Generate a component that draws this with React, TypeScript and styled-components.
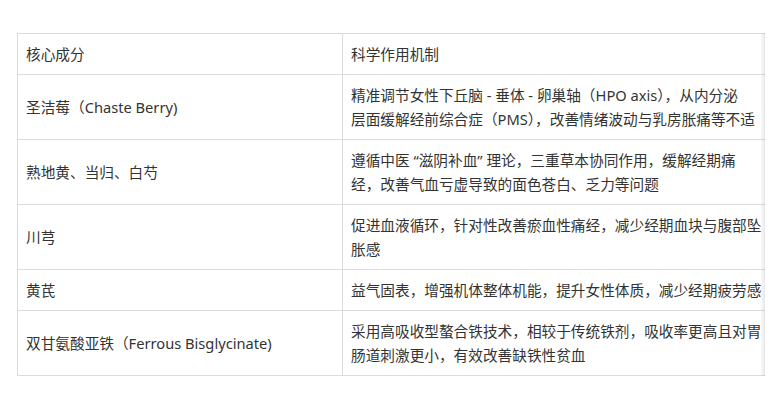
import styled, { createGlobalStyle } from 'styled-components';

type Row = {
  name: string;
  effect: string[];
};

const rows: Row[] = [
  {
    name: '圣洁莓（Chaste Berry)',
    effect: [
      '精准调节女性下丘脑 - 垂体 - 卵巢轴（HPO axis），从内分泌',
      '层面缓解经前综合症（PMS），改善情绪波动与乳房胀痛等不适',
    ],
  },
  {
    name: '熟地黄、当归、白芍',
    effect: [
      '遵循中医 “滋阴补血” 理论，三重草本协同作用，缓解经期痛',
      '经，改善气血亏虚导致的面色苍白、乏力等问题',
    ],
  },
  {
    name: '川芎',
    effect: ['促进血液循环，针对性改善瘀血性痛经，减少经期血块与腹部坠', '胀感'],
  },
  {
    name: '黄芪',
    effect: ['益气固表，增强机体整体机能，提升女性体质，减少经期疲劳感'],
  },
  {
    name: '双甘氨酸亚铁（Ferrous Bisglycinate)',
    effect: [
      '采用高吸收型螯合铁技术，相较于传统铁剂，吸收率更高且对胃',
      '肠道刺激更小，有效改善缺铁性贫血',
    ],
  },
];

const GlobalStyle = createGlobalStyle`
  body {
    margin: 0;
    background: #fff;
    font-family: "Noto Sans", "Noto Sans CJK SC", sans-serif;
  }
`;

const Page = styled.div`
  padding: 33px 0 0 17px;
`;

const Scroller = styled.div`
  position: relative;
  width: 748px;
  overflow: hidden;

  &::after {
    content: '';
    position: absolute;
    top: 0;
    right: 0;
    bottom: 0;
    width: 4px;
    background: linear-gradient(to right, rgba(0, 0, 0, 0.02), rgba(0, 0, 0, 0.09));
  }
`;

const Table = styled.table`
  border-collapse: collapse;
  table-layout: fixed;
  width: 760px;
  color: #333;
  font-size: 14.67px;
  line-height: 24px;
`;

const Col = styled.col<{ $w: number }>`
  width: ${(p) => p.$w}px;
`;

const Cell = styled.td`
  border: 1px solid #dcdcdc;
  padding: 8px 8px 8px 8px;
  vertical-align: middle;
  text-align: left;
  font-weight: normal;
  white-space: nowrap;
`;

const HeadCell = styled(Cell).attrs({ as: 'th' })``;

export default function App() {
  return (
    <>
      <GlobalStyle />
      <Page>
        <Scroller>
          <Table>
            <colgroup>
              <Col $w={325} />
              <Col $w={435} />
            </colgroup>
            <thead>
              <tr>
                <HeadCell>核心成分</HeadCell>
                <HeadCell>科学作用机制</HeadCell>
              </tr>
            </thead>
            <tbody>
              {rows.map((row) => (
                <tr key={row.name}>
                  <Cell>{row.name}</Cell>
                  <Cell>
                    {row.effect.map((line, i) => (
                      <span key={i}>
                        {i > 0 && <br />}
                        {line}
                      </span>
                    ))}
                  </Cell>
                </tr>
              ))}
            </tbody>
          </Table>
        </Scroller>
      </Page>
    </>
  );
}
